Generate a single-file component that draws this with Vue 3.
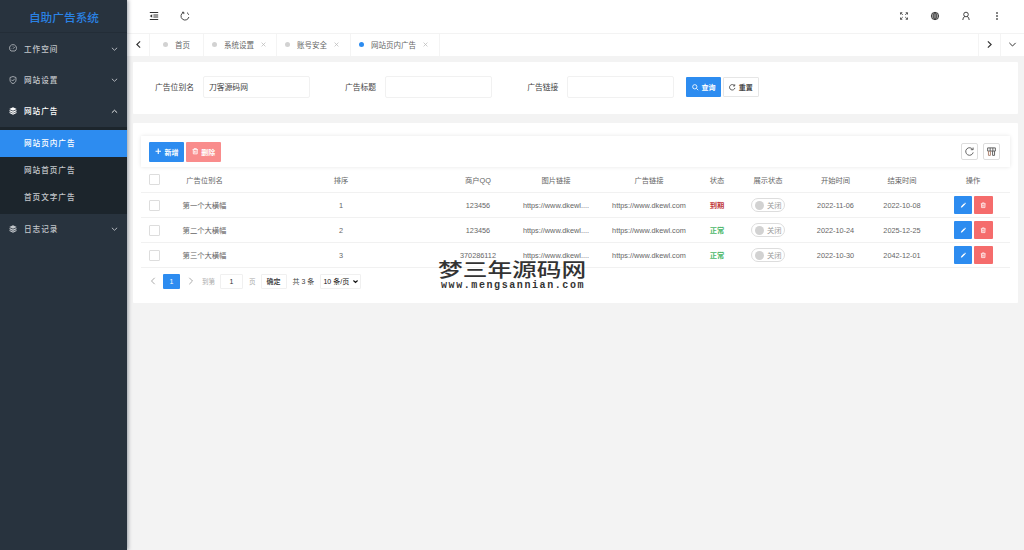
<script setup>
import { ref } from 'vue'

const menus = [
  { name: '工作空间', icon: 'dash' },
  { name: '网站设置', icon: 'shield' },
  { name: '网站广告', icon: 'layers', open: true, children: ['网站页内广告', '网站首页广告', '首页文字广告'] },
  { name: '日志记录', icon: 'layers' },
]
const activeMenu = ref('网站页内广告')
const tabs = [
  { name: '首页', w: 54 },
  { name: '系统设置', w: 73, close: true },
  { name: '账号安全', w: 74, close: true },
  { name: '网站页内广告', w: 89, close: true, on: true },
]
const heads = ['广告位别名', '排序', '商户QQ', '图片链接', '广告链接', '状态', '展示状态', '开始时间', '结束时间', '操作']
const rows = [
  { name: '第一个大横幅', sort: 1, qq: '123456', ok: false, start: '2022-11-06', end: '2022-10-08' },
  { name: '第二个大横幅', sort: 2, qq: '123456', ok: true, start: '2022-10-24', end: '2025-12-25' },
  { name: '第三个大横幅', sort: 3, qq: '370286112', ok: true, start: '2022-10-30', end: '2042-12-01' },
]
const alias = ref('刀客源码网')
const title = ref('')
const link = ref('')
</script>

<template>
  <div class="app">
    <aside class="side">
      <div class="logo">自助广告系统</div>
      <template v-for="m in menus" :key="m.name">
        <div class="item" :class="{ open: m.open }">
          <svg v-if="m.icon === 'dash'" class="mi" viewBox="0 0 16 16"><path d="M4 14A7 7 0 1 1 12 14Z M8 9.5L11.5 6M3.5 9h1M8 4v1" /></svg>
          <svg v-else-if="m.icon === 'shield'" class="mi" viewBox="0 0 16 16"><path d="M8 1L14 3V8C14 12 11 14 8 15.3C5 14 2 12 2 8V3ZM4.8 7.5L7.3 10L11.5 5.5" /></svg>
          <svg v-else class="mi solid" viewBox="0 0 16 16"><path d="M8 .5L15.5 4 8 7.5.5 4ZM1 6L8 9.2 15 6V8.5L8 11.8 1 8.5ZM1 10L8 13.2 15 10V12L8 15.5 1 12Z" /></svg>
          <span>{{ m.name }}</span>
          <svg class="arr" viewBox="0 0 8 8"><path :d="m.open ? 'M1 6.5L4 3.7 7 6.5' : 'M1 3.2L4 6 7 3.2'" /></svg>
        </div>
        <div v-if="m.children" class="subs">
          <div v-for="c in m.children" :key="c" class="sub" :class="{ on: c === activeMenu }" @click="activeMenu = c">{{ c }}</div>
        </div>
      </template>
    </aside>

    <main class="main">
      <header class="top">
        <svg class="ti" viewBox="0 0 10 10"><path d="M.8 1.5H9.2M4.4 4H9.2M4.4 6H9.2M.8 8.5H9.2" stroke-width="1.2" /><path class="f" d="M.8 5L3.2 3.2V6.8Z" /></svg>
        <svg class="ti" viewBox="0 0 10 10"><path d="M3.4 1.4A4 4 0 1 0 8.9 6M7 1.6A4 4 0 0 1 8.7 3.8M2 1.3H3.8V3.1" /></svg>
        <span class="grow"></span>
        <svg class="ti" viewBox="0 0 10 10"><path d="M1.5 3.5V1.7H3.3M6.7 1.7H8.5V3.5M8.5 6.5V8.3H6.7M3.3 8.3H1.5V6.5M1.7 1.9L3.8 4M8.3 1.9L6.2 4M1.7 8.1L3.8 6M8.3 8.1L6.2 6" stroke-width=".8" /></svg>
        <svg class="ti" viewBox="0 0 10 10"><circle cx="5" cy="5" r="3.7" /><path d="M1.3 5H8.7M5 1.3V8.7M2 3H8M2 7H8M5 1.3Q1.4 5 5 8.7Q8.6 5 5 1.3" stroke-width=".8" /></svg>
        <svg class="ti" viewBox="0 0 10 10"><circle cx="5" cy="3.5" r="2.3" /><path d="M1.8 9Q1.9 6 4 5.4M8.2 9Q8.1 6 6 5.4" /></svg>
        <svg class="ti" viewBox="0 0 10 10"><path class="f" d="M4.2 1.2h1.6v1.6h-1.6ZM4.2 4.2h1.6v1.6h-1.6ZM4.2 7.2h1.6v1.6h-1.6Z" /></svg>
      </header>
      <nav class="tabs">
        <span class="tnav first"><svg viewBox="0 0 10 10"><path d="M6.8 1.5L3.2 5 6.8 8.5" /></svg></span>
        <span v-for="t in tabs" :key="t.name" class="tab" :class="{ closable: t.close }" :style="{ width: t.w + 'px' }">
          <i :class="{ on: t.on }"></i><b>{{ t.name }}</b>
          <svg v-if="t.close" viewBox="0 0 6 6"><path d="M.7 .7L5.3 5.3M5.3 .7L.7 5.3" /></svg>
        </span>
        <span class="grow"></span>
        <span class="tnav last"><svg viewBox="0 0 10 10"><path d="M3.2 1.5L6.8 5 3.2 8.5" /></svg></span>
        <span class="tnav last"><svg viewBox="0 0 10 10"><path d="M1.5 3.2L5 6.7 8.5 3.2" stroke-width="1.1" /></svg></span>
      </nav>

      <section class="card search">
        <label>广告位别名</label><input v-model="alias" />
        <label>广告标题</label><input v-model="title" />
        <label>广告链接</label><input v-model="link" />
        <button class="btn blue query"><svg viewBox="0 0 10 10"><circle cx="4.3" cy="4.3" r="3.3" /><path d="M6.8 6.8L9.5 9.5" /></svg>查询</button>
        <button class="btn plain"><svg viewBox="0 0 10 10"><path d="M8.4 2.6A4.2 4.2 0 1 0 9.1 6M8.8 .5V3H6.2" /></svg>重置</button>
      </section>

      <section class="card list">
        <div class="bar">
          <button class="btn blue"><svg viewBox="0 0 10 10"><path d="M5 .8V9.2M.8 5H9.2" stroke-width="1.7" /></svg>新增</button>
          <button class="btn red"><svg viewBox="0 0 10 10"><path d="M.8 2.5H9.2M3.2 2.3V.9H6.8V2.3M2 2.7V9H8V2.7M4 4.3V7.4M6 4.3V7.4" /></svg>删除</button>
          <span class="grow"></span>
          <span class="tool"><svg viewBox="0 0 10 10"><path d="M8.6 2.8A4.2 4.2 0 1 0 9.1 6M9 .6V3H6.5" /></svg></span>
          <span class="tool"><svg viewBox="0 0 10 10"><path d="M.7 1H9.3V4.5H.7ZM3.5 1V4.5M6.5 1V4.5" /><path d="M1.6 4.5V9.3H3.8V4.5" stroke="#a77c68" /><path d="M6.2 4.5V9.3H8.4V4.5" /></svg></span>
        </div>

        <div class="tr head">
          <span><i class="check"></i></span>
          <span v-for="h in heads" :key="h">{{ h }}</span>
        </div>
        <div v-for="r in rows" :key="r.name" class="tr">
          <span><i class="check"></i></span>
          <span>{{ r.name }}</span>
          <span>{{ r.sort }}</span>
          <span>{{ r.qq }}</span>
          <span>https://www.dkewl....</span>
          <span>https://www.dkewl.com</span>
          <span class="state" :class="{ ok: r.ok }">{{ r.ok ? '正常' : '到期' }}</span>
          <span><span class="switch"><i></i>关闭</span></span>
          <span>{{ r.start }}</span>
          <span>{{ r.end }}</span>
          <span class="ops">
            <button class="op"><svg viewBox="0 0 8 8"><path class="w" d="M1 7L1.5 5.2 5.2 1.5 6.5 2.8 2.8 6.5ZM5.6 1.1L6.2 .6 7.4 1.8 6.9 2.4Z" /></svg></button>
            <button class="op del"><svg viewBox="0 0 8 8"><path d="M1 2.2H7M2.8 1.9V1.1H5.2V1.9M1.9 2.2V6.9H6.1V2.2M3.3 3.4V5.8M4.7 3.4V5.8" /></svg></button>
          </span>
        </div>

        <div class="pager">
          <svg class="pa" viewBox="0 0 8 8"><path d="M5.7 .8L2.5 4 5.7 7.2" /></svg>
          <span class="cur">1</span>
          <svg class="pa next" viewBox="0 0 8 8"><path d="M2.3 .8L5.5 4 2.3 7.2" /></svg>
          <span class="mute">到第</span>
          <span class="box num">1</span>
          <span class="mute">页</span>
          <span class="box ok">确定</span>
          <span class="total">共 3 条</span>
          <span class="box sel">10 条/页<svg viewBox="0 0 6 6"><path d="M.5 1.8L3 4.2 5.5 1.8" /></svg></span>
        </div>
      </section>
    </main>

    <div class="mark"><div class="cn">梦三年源码网</div><div class="url">www.mengsannian.com</div></div>
  </div>
</template>

<style>
body { margin: 0; background: #f3f3f3; }
</style>

<style scoped>
* { box-sizing: border-box; }
.app { position: relative; display: flex; width: 1024px; height: 550px; overflow: hidden; background: #f3f3f3; font-family: "Liberation Sans", "Noto Sans CJK SC", sans-serif; font-size: 7.3px; color: #666; white-space: nowrap; }
svg { fill: none; stroke: currentColor; flex: none; overflow: visible; }
i { font-style: normal; }
button, input { font-family: inherit; }
.grow { flex: 1; }

.side { width: 127px; background: #28333e; box-shadow: 1px 0 4px rgba(0, 21, 41, .4); z-index: 2; color: #c3c7cb; flex: none; }
.logo { height: 33px; line-height: 36px; padding-left: 1px; text-align: center; color: #2a82e4; font-size: 11.7px; font-weight: 500; border-bottom: 1px solid #232d37; }
.item { height: 31.4px; display: flex; align-items: center; padding: 0 9px 1px; font-size: 7.6px; letter-spacing: 1px; font-weight: 500; }
.item.open { color: #fff; }
.mi { width: 8px; height: 8px; margin-right: 7px; stroke-width: 1.5; }
.mi.solid { fill: currentColor; stroke: none; }
.arr { width: 7px; height: 7px; margin-left: auto; stroke-width: 1; }
.subs { background: #1c252c; padding: 2.5px 0 3px; font-size: 7.6px; letter-spacing: 1px; }
.sub { height: 27px; line-height: 27px; padding-left: 24px; font-weight: 500; }
.sub.on { background: #2d8cf0; color: #fff; }

.main { flex: 1; min-width: 0; }
.top { height: 34px; background: #fff; border-bottom: 1px solid #f3f3f3; display: flex; align-items: center; gap: 21px; padding: 0 22px 1px; color: #333; }
.ti { width: 10px; height: 10px; stroke-width: .9; }
.ti .f { fill: currentColor; stroke: none; }
.tabs { height: 22px; background: #fff; display: flex; color: #666; }
.tab { display: flex; align-items: center; padding: 0 0 1px 13px; border-right: 1px solid #f4f4f4; }
.tab.closable { padding-left: 8px; }
.tab i { width: 5px; height: 5px; border-radius: 50%; background: #d2d2d2; margin-right: 7px; }
.tab i.on { background: #2d8cf0; }
.tab b { font-weight: 400; font-size: 7.5px; }
.tab svg { width: 5px; height: 5px; margin-left: 7px; color: #bbb; stroke-width: .9; }
.tnav { width: 22px; display: flex; align-items: center; justify-content: center; color: #333; padding-bottom: 1px; }
.tnav svg { width: 9px; height: 9px; stroke-width: 1.3; }
.tnav.first { width: 23px; border-right: 1px solid #f4f4f4; }
.tnav.last { border-left: 1px solid #f4f4f4; }
.tnav.last:last-child { width: 24px; }

.card { background: #fff; margin-left: 6px; width: 885px; border-radius: 1px; }
.search { margin-top: 6px; height: 52px; display: flex; align-items: center; padding: 0 0 2px 22px; color: #444; }
.search label { font-size: 7.8px; margin-right: 9px; padding-bottom: 1px; }
.search input { width: 107px; height: 22px; border: 1px solid #f1f1f1; border-radius: 2px; padding: 0 5px 1px; font-size: 7.8px; color: #444; outline: 0; margin-right: 35px; background: #fff; }
.search input:nth-of-type(3) { margin-right: 12px; }
.btn { display: flex; align-items: center; justify-content: center; gap: 3px; width: 35px; height: 20px; padding: 0; border: 0; border-radius: 1px; font-size: 7px; font-weight: 700; color: #fff; margin-right: 1.7px; }
.btn svg { width: 6.5px; height: 6.5px; stroke-width: 1.3; }
.blue { background: #2d8cf0; }
.red { background: #f98c8c; }
.plain { width: 36px; background: #fff; color: #444; border: 1px solid #e6e6e6; }

.list { margin-top: 9px; height: 180px; padding: 13px 8px 0; }
.bar { height: 31px; display: flex; align-items: center; padding: 0 10px 0 8.3px; box-shadow: 0 0 4px rgba(0, 0, 0, .1); margin-bottom: 1px; }
.tool { width: 17px; height: 17px; margin-left: 5.5px; border: 1px solid #ddd; border-radius: 2px; display: flex; align-items: center; justify-content: center; color: #555; }
.tool svg { width: 9px; height: 9px; }
.tr { display: grid; grid-template-columns: 27px 73px 200px 74px 82px 104px 32px 70px 65px 68px 74px; height: 25px; border-bottom: 1px solid #f1f1f1; align-items: center; text-align: center; }
.head { padding-bottom: 1px; }
.tr > span { display: flex; justify-content: center; align-items: center; min-width: 0; }
.check { width: 11px; height: 11px; border: 1px solid #ddd; border-radius: 1px; }
.state { color: #c03639; font-weight: 700; }
.state.ok { color: #4cb86a; }
.switch { width: 34px; height: 14px; border: 1px solid #ddd; border-radius: 8px; display: flex; align-items: center; gap: 3px; padding-left: 3px; color: #999; }
.switch i { width: 9px; height: 9px; border-radius: 50%; background: #d2d2d2; }
.ops { gap: 2px; }
.op { width: 18.5px; height: 18px; padding: 0; border: 0; border-radius: 1px; background: #2d8cf0; color: #fff; display: flex; align-items: center; justify-content: center; }
.op svg { width: 6.5px; height: 6.5px; stroke-width: .9; }
.op .w { fill: #fff; stroke: none; }
.del { background: #f56c6c; }

.pager { display: flex; align-items: center; height: 26px; padding-left: 7.5px; font-size: 7px; color: #444; }
.pa { width: 8px; height: 8px; color: #aaa; stroke-width: 1; margin-right: 6.5px; }
.cur { width: 17px; height: 15px; line-height: 15px; text-align: center; color: #fff; background: #2d8cf0; border-radius: 1px; margin-right: 7px; }
.pa.next { margin-right: 7px; }
.mute { color: #aaa; font-size: 6.5px; }
.box { height: 15px; line-height: 13px; border: 1px solid #f0f0f0; border-radius: 1px; text-align: center; color: #333; }
.num { width: 23px; margin: 0 6px 0 5px; }
.ok.box { width: 26px; margin: 0 6px 0 5px; font-weight: 500; }
.total { margin-right: 6px; }
.sel { width: 41px; display: flex; align-items: center; justify-content: center; gap: 4px; color: #111; }
.sel svg { width: 5px; height: 5px; stroke-width: 1.4; }

.mark { position: absolute; left: 438px; top: 261px; width: 150px; color: #333; z-index: 3; }
.cn { font-family: "Liberation Serif", "Noto Sans CJK SC", serif; font-size: 24.7px; line-height: 20px; height: 20px; font-weight: 500; transform-origin: 0 50%; transform: scaleY(.78); }
.url { font-family: "Liberation Mono", monospace; font-weight: 700; font-size: 10px; line-height: 10px; letter-spacing: 1.58px; padding-left: 3px; }
</style>
